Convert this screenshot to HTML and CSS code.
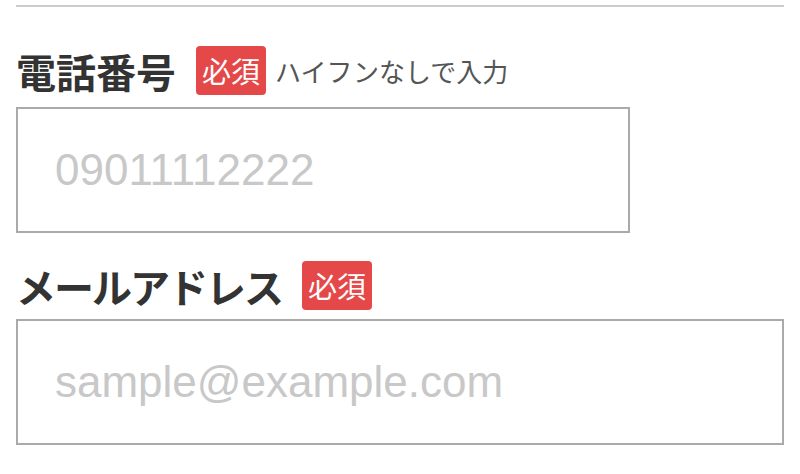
FILE: index.html
```html
<!DOCTYPE html>
<html lang="ja">
<head>
  <meta charset="UTF-8">
  <meta name="viewport" content="width=device-width, initial-scale=1.0">
  <title>お問い合わせフォーム</title>
  <link rel="stylesheet" href="styles.css">
</head>
<body>
  <hr class="divider">

  <form class="contact-form">
    <div class="field">
      <label class="field-label" for="tel">
        <span class="label-text">電話番号</span>
        <span class="required">必須</span>
        <span class="hint">ハイフンなしで入力</span>
      </label>
      <input type="tel" id="tel" class="text-input short" placeholder="09011112222">
    </div>

    <div class="field">
      <label class="field-label" for="email">
        <span class="label-text kana">メールアドレス</span>
        <span class="required">必須</span>
      </label>
      <input type="email" id="email" class="text-input" placeholder="sample@example.com">
    </div>
  </form>
</body>
</html>
```

FILE: styles.css
```css
* {
  box-sizing: border-box;
}

body {
  margin: 0;
  padding: 5px 16px 0;
  background: #fff;
  color: #333;
  font-family: "Noto Sans CJK JP", "Noto Sans", sans-serif;
}

.divider {
  margin: 0;
  border: 0;
  border-top: 2px solid #ccc;
}

.field-label {
  display: flex;
  align-items: center;
  margin: 28px 0 9px;
}

.field:first-child .field-label {
  margin-top: 39px;
  margin-bottom: 12px;
}

.label-text {
  font-size: 40px;
  font-weight: 700;
  line-height: 1.2;
  margin-right: 20px;
}

/* katakana runs a little wide in Noto */
.label-text.kana {
  letter-spacing: -2px;
}

.required {
  display: inline-block;
  background: #e54848;
  color: #fff;
  font-size: 29px;
  line-height: 39px;
  padding: 5px 6px;
  border-radius: 4px;
}

.hint {
  margin-left: 9px;
  font-size: 26px;
  color: #555;
}

.text-input {
  display: block;
  width: 100%;
  height: 126px;
  padding: 0 37px;
  border: 2px solid #aaa;
  border-radius: 0;
  font-family: "Liberation Sans", Arial, sans-serif;
  font-size: 44px;
  color: #333;
  outline: none;
}

.text-input.short {
  width: 80%;
}

.text-input::placeholder {
  color: #c8c8c8;
}
```
